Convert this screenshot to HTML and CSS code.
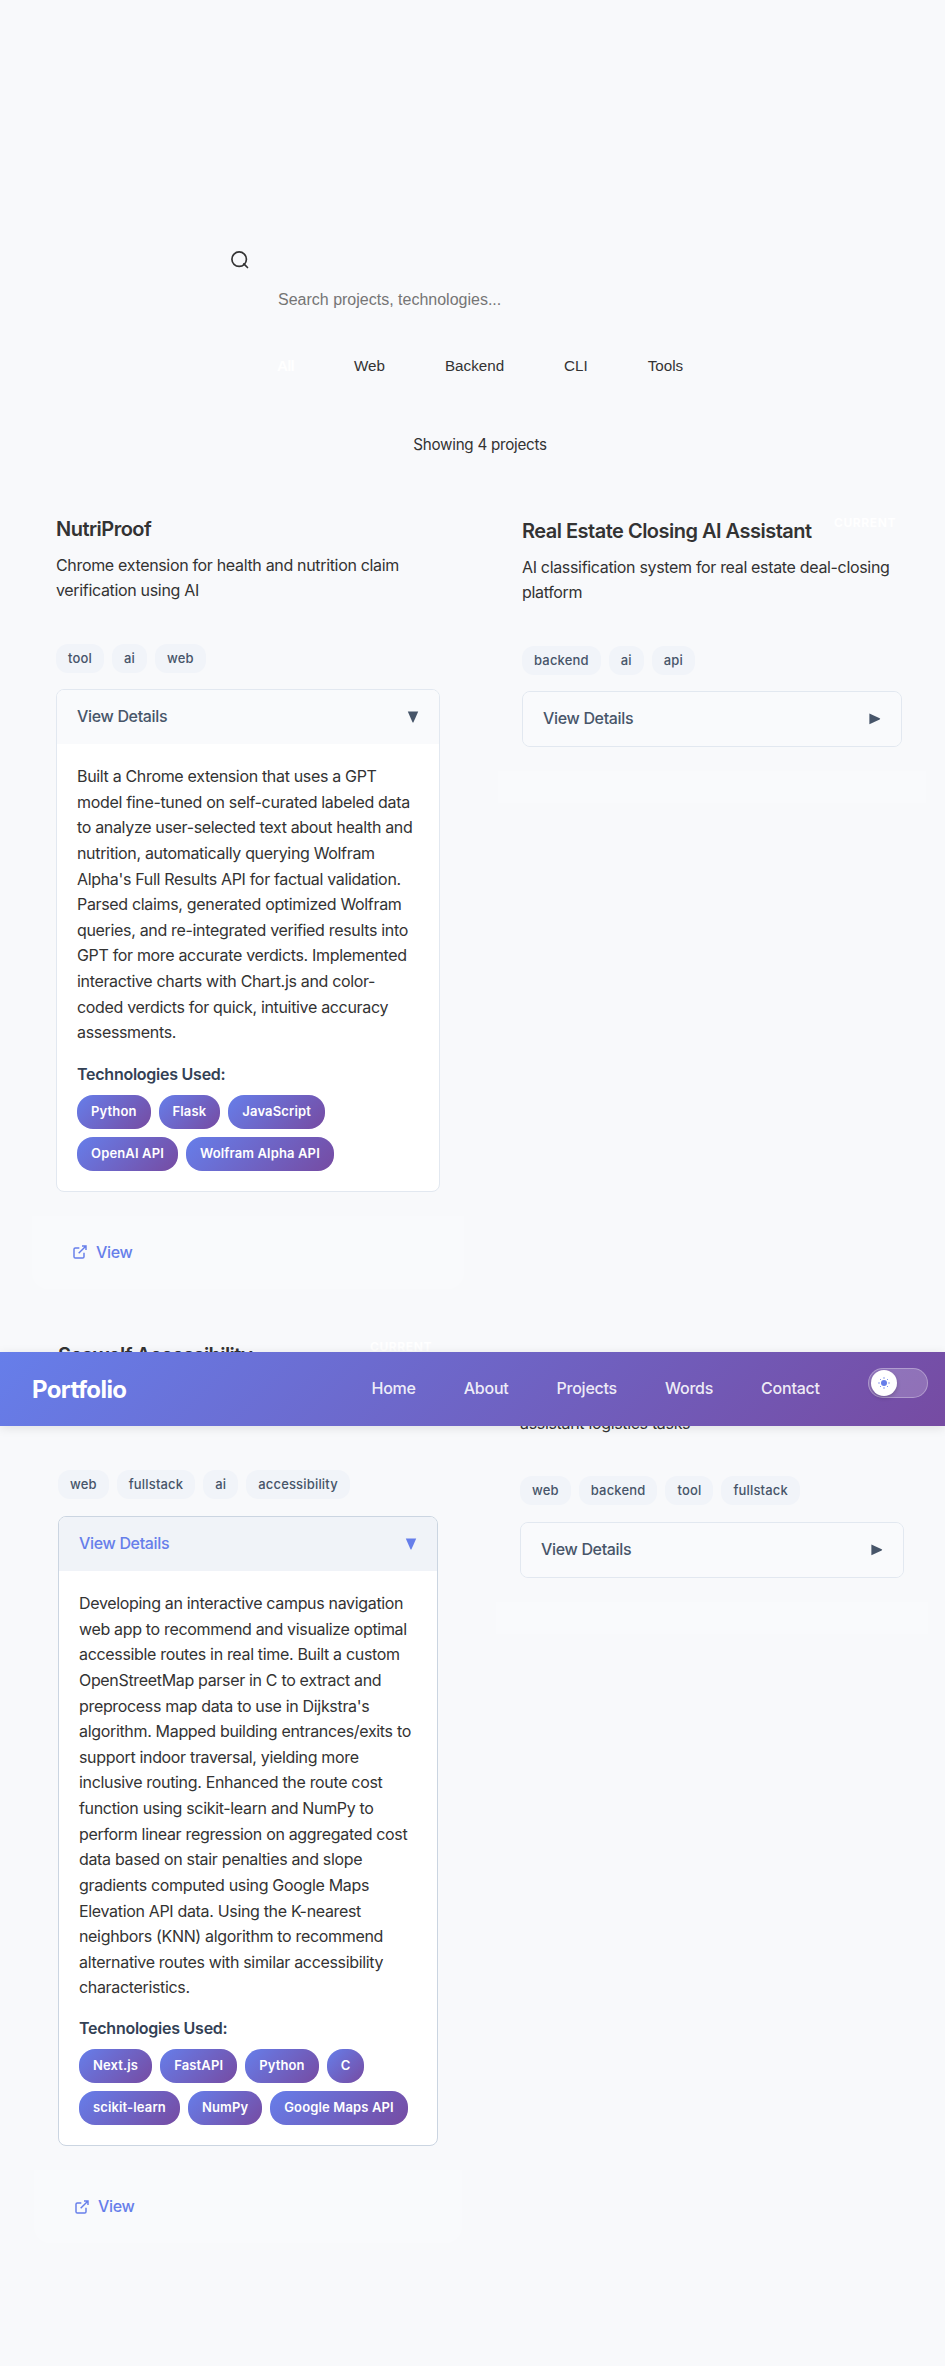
FILE: index.html
```html
<!DOCTYPE html>
<html lang="en">
<head>
<meta charset="utf-8">
<title>Portfolio</title>
<link rel="stylesheet" href="styles.css">
</head>
<body>
<header class="navbar">
  <div class="brand">Portfolio</div>
  <nav class="nav-links"><a>Home</a><a>About</a><a>Projects</a><a>Words</a><a>Contact</a></nav>
  <div class="toggle"><div class="knob"><svg width="12" height="12" viewBox="0 0 12 12"><circle cx="6" cy="6" r="3" fill="#667eea"/><path d="M6 .2v1.6M6 10.2v1.6M.2 6h1.6M10.2 6h1.6M2 2l.9.9M9.1 9.1l.9.9M2 10l.9-.9M9.1 2.9L10 2" stroke="#667eea" stroke-width=".9"/></svg></div></div>
</header>
<main class="page">
  <section class="search">
    <svg class="search-icon" width="20" height="20" viewBox="0 0 24 24" fill="none" stroke="#333" stroke-width="2"><circle cx="11" cy="11" r="8.7"/><path d="M21 21l-4.35-4.35" stroke-linecap="round"/></svg>
    <div class="search-input">Search projects, technologies...</div>
    <div class="filters"><span class="active">All</span><span>Web</span><span>Backend</span><span>CLI</span><span>Tools</span></div>
    <p class="count">Showing 4 projects</p>
  </section>
  <section class="grid">
    <article class="card card-1">
      <h3>NutriProof</h3>
      <p class="desc">Chrome extension for health and nutrition claim<br>verification using AI</p>
      <div class="tags"><span>tool</span><span>ai</span><span>web</span></div>
      <div class="details">
        <div class="summary"><span>View Details</span><svg width="12" height="12" viewBox="0 0 12 12"><path d="M.8.5h10.4L6.6 11q-.6 1-1.2 0z" fill="currentColor"/></svg></div>
        <div class="body">
          <p>Built a Chrome extension that uses a GPT<br>model fine-tuned on self-curated labeled data<br>to analyze user-selected text about health and<br>nutrition, automatically querying Wolfram<br>Alpha's Full Results API for factual validation.<br>Parsed claims, generated optimized Wolfram<br>queries, and re-integrated verified results into<br>GPT for more accurate verdicts. Implemented<br>interactive charts with Chart.js and color-<br>coded verdicts for quick, intuitive accuracy<br>assessments.</p>
          <h4>Technologies Used:</h4>
          <div class="chips"><span>Python</span><span>Flask</span><span>JavaScript</span><span>OpenAI API</span><span>Wolfram Alpha API</span></div>
        </div>
      </div>
      <div class="foot"><svg width="16" height="16" viewBox="0 0 24 24" fill="none" stroke="currentColor" stroke-width="2.2"><path d="M18 13v6a2 2 0 0 1-2 2H5a2 2 0 0 1-2-2V8a2 2 0 0 1 2-2h6M15 3h6v6M10 14L21 3"/></svg><a>View</a></div>
    </article>
    <article class="card card-2">
      <span class="badge">CURRENT</span>
      <h3>Real Estate Closing AI Assistant</h3>
      <p class="desc">AI classification system for real estate deal-closing<br>platform</p>
      <div class="tags"><span>backend</span><span>ai</span><span>api</span></div>
      <div class="details">
        <div class="summary"><span>View Details</span><svg width="12" height="12" viewBox="0 0 12 12"><path d="M.4.4v10.8L10.7 6.4q1-.6 0-1.2z" fill="currentColor"/></svg></div>
      </div>
      <div class="foot empty"></div>
    </article>
    <article class="card card-3">
      <span class="badge">CURRENT</span>
      <h3>Seawolf Accessibility</h3>
      <div class="tags"><span>web</span><span>fullstack</span><span>ai</span><span>accessibility</span></div>
      <div class="details hover">
        <div class="summary"><span>View Details</span><svg width="12" height="12" viewBox="0 0 12 12"><path d="M.8.5h10.4L6.6 11q-.6 1-1.2 0z" fill="currentColor"/></svg></div>
        <div class="body">
          <p>Developing an interactive campus navigation<br>web app to recommend and visualize optimal<br>accessible routes in real time. Built a custom<br>OpenStreetMap parser in C to extract and<br>preprocess map data to use in Dijkstra's<br>algorithm. Mapped building entrances/exits to<br>support indoor traversal, yielding more<br>inclusive routing. Enhanced the route cost<br>function using scikit-learn and NumPy to<br>perform linear regression on aggregated cost<br>data based on stair penalties and slope<br>gradients computed using Google Maps<br>Elevation API data. Using the K-nearest<br>neighbors (KNN) algorithm to recommend<br>alternative routes with similar accessibility<br>characteristics.</p>
          <h4>Technologies Used:</h4>
          <div class="chips"><span>Next.js</span><span>FastAPI</span><span>Python</span><span>C</span><span>scikit-learn</span><span>NumPy</span><span>Google Maps API</span></div>
        </div>
      </div>
      <div class="foot"><svg width="16" height="16" viewBox="0 0 24 24" fill="none" stroke="currentColor" stroke-width="2.2"><path d="M18 13v6a2 2 0 0 1-2 2H5a2 2 0 0 1-2-2V8a2 2 0 0 1 2-2h6M15 3h6v6M10 14L21 3"/></svg><a>View</a></div>
    </article>
    <article class="card card-4">
      <p class="desc">assistant logistics tasks</p>
      <div class="tags"><span>web</span><span>backend</span><span>tool</span><span>fullstack</span></div>
      <div class="details">
        <div class="summary"><span>View Details</span><svg width="12" height="12" viewBox="0 0 12 12"><path d="M.4.4v10.8L10.7 6.4q1-.6 0-1.2z" fill="currentColor"/></svg></div>
      </div>
      <div class="foot empty"></div>
    </article>
  </section>
</main>
</body>
</html>
```
FILE: styles.css
```css
* { box-sizing: border-box; }
body { margin: 0; background: #f8f9fb; color: #333; font: 16px/25.63px Inter, "Liberation Sans", sans-serif; letter-spacing: -0.33px; }
h3, h4, p { margin: 0; }
.page { position: relative; height: 2366px; overflow: hidden; padding-top: 250px; }
.navbar { position: absolute; z-index: 5; top: 1352px; left: 0; right: 0; height: 74px; display: flex; align-items: center; padding: 0 17px 0 32px; background: linear-gradient(135deg, #667eea 0%, #764ba2 100%); box-shadow: 0 2px 10px rgba(0,0,0,.1); color: #fff; }
.brand { font-size: 24px; font-weight: 700; letter-spacing: -0.6px; width: 339.5px; padding-top: 2px; font-variant-ligatures: none; }
.nav-links { display: flex; gap: 48px; flex: 1; font-weight: 500; color: rgba(255,255,255,.9); letter-spacing: -0.24px; }
.toggle { width: 60px; height: 30px; border-radius: 15px; border: 1px solid rgba(255,255,255,.3); background: rgba(255,255,255,.2); padding: 1px 2px; margin-bottom: 12px; }
.knob { width: 26px; height: 26px; border-radius: 50%; background: #fff; display: flex; align-items: center; justify-content: center; box-shadow: 0 2px 4px rgba(0,0,0,.2); }
.search { height: 262px; }
.search-icon { display: block; margin-left: 230px; }
.search-input { font: 16px/20px "Liberation Sans", Arial, sans-serif; color: #757575; margin: 20px 0 0 278px; letter-spacing: 0; }
.filters { display: flex; margin: 46px 0 0 277px; gap: 60px; font: 15.2px/20px "Liberation Sans", Arial, sans-serif; letter-spacing: 0; }
.filters .active { color: #fff; font-weight: 700; letter-spacing: -0.8px; }
.count { font-size: 15.2px; text-align: center; margin: 56px 0 0; padding-left: 15px; letter-spacing: -0.27px; }
.grid { display: grid; grid-template-columns: 432px 432px; grid-template-rows: 824px auto; column-gap: 32px; padding-left: 32px; align-items: start; white-space: nowrap; }
.card { position: relative; padding-top: 2px; }
.card h3 { font-size: 20px; line-height: 30px; font-weight: 600; letter-spacing: -0.51px; margin: 0 24px 9px; }
.card-3 h3 { letter-spacing: -0.62px; }
.desc { line-height: 25px; margin: 0 24px; }
.tags { display: flex; gap: 8px; margin: 41px 24px 16px; }
.tags span { background: #f1f4f9; color: #475569; font-size: 13px; font-weight: 500; line-height: 29px; padding: 0 12px; border-radius: 12px; letter-spacing: 0.17px; }
.details { margin: 0 24px; border: 1px solid #e2e8f0; border-radius: 8px; overflow: hidden; background: #fff; }
.summary { display: flex; justify-content: space-between; align-items: center; height: 54px; padding: 0 20px; background: #f9fafc; color: #475569; font-weight: 500; }
.hover { border-color: #cbd5e1; }
.hover .summary { background: #f0f3f8; color: #667eea; }
.body { padding: 20px; }
.body h4 { font-size: 16px; font-weight: 600; color: #334155; line-height: 26px; margin: 15px 0 8px; letter-spacing: -0.25px; }
.chips { display: flex; flex-wrap: wrap; gap: 8px; }
.chips span { line-height: 33px; height: 34px; padding: 0 14px; border-radius: 16px; background: linear-gradient(135deg, #667eea 0%, #764ba2 100%); color: #fff; font-size: 13px; font-weight: 600; letter-spacing: 0.14px; }
.foot { margin-top: 24px; height: 73px; border-radius: 0 0 16px 16px; background: #f9fafc; display: flex; align-items: center; gap: 8px; padding-left: 40px; color: #667eea; font-weight: 500; }
.foot.empty { height: 32px; border-radius: 0; }
.badge { position: absolute; top: 0; right: 30px; color: #fff; font-size: 12px; line-height: 18px; font-weight: 700; letter-spacing: 0.6px; }
.card-2 { margin: 2px 0 0 2px; width: 428px; }
.card-3 { margin: 2px 0 0 2px; width: 428px; }
.card-3 .tags { margin: 100px 24px 17px; }
.card-3 h4 { margin-top: 14px; }
.card-4 { padding-top: 75px; }
.card-4 .tags { margin: 40px 24px 17px; }
```
